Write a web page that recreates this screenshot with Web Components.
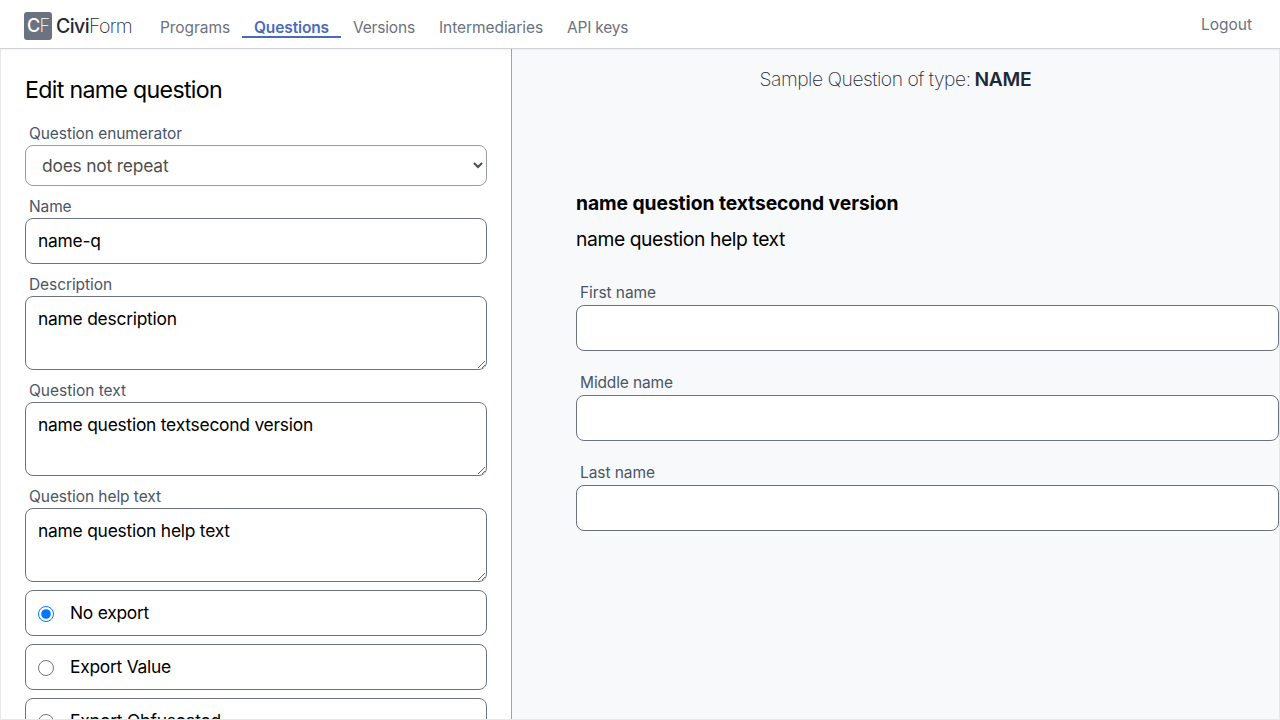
<!DOCTYPE html>
<html lang="en">
<head>
<meta charset="utf-8">
<title>Edit name question</title>
<style>
html, body { margin: 0; height: 100%; overflow: hidden; background: #fff; }
body { font-family: Inter, "Liberation Sans", sans-serif; font-size: 15.5px; line-height: 24px; color: #000; }
</style>
</head>
<body>
<civi-page></civi-page>
<script>
function define(name, html, setup) {
  const t = document.createElement('template');
  t.innerHTML = '<style>*{box-sizing:border-box}:host{box-sizing:border-box;display:block}</style>' + html;
  customElements.define(name, class extends HTMLElement {
    connectedCallback() {
      if (!this.shadowRoot) this.attachShadow({ mode: 'open' }).append(t.content.cloneNode(true));
      if (setup) setup(this, this.shadowRoot);
    }
  });
}

/* Text with tracking that makes it exactly `w` pixels wide. */
define('fit-text', '<style>:host{display:inline-block;white-space:nowrap}</style><slot></slot>', el => {
  const w = parseFloat(el.getAttribute('w'));
  if (!w) return;
  el.style.letterSpacing = '0px';
  const n = el.textContent.length;
  el.style.letterSpacing = ((w - el.getBoundingClientRect().width) / n).toFixed(4) + 'px';
});

define('civi-logo', `<style>
:host{display:flex;align-items:center;width:124px;height:28px;margin-top:12px;color:#1f2937;font-size:19.5px;line-height:28px}
.mark{width:28px;height:28px;border-radius:3px;background:#6b7280;color:#fff;margin-right:4px;display:flex;justify-content:center;font-size:18px}
.mark fit-text{font-weight:500}
.name fit-text{font-weight:450}
.mark fit-text.thin,.name fit-text.thin{font-weight:200}
.name{display:flex}
</style><div class="mark"><fit-text w="12.5">C</fit-text><fit-text class="thin" w="9.5">F</fit-text></div>
<div class="name"><fit-text w="33">Civi</fit-text><fit-text class="thin" w="43">Form</fit-text></div>`);

define('nav-item', `<style>
:host{padding:1px 12px 0;height:23px;color:#6b7280;border-bottom:2px solid transparent;margin-top:15px}
:host([active]){color:#4a6bba;border-color:#4a6bba;font-weight:600}
</style><slot></slot>`);

define('civi-header', `<style>
:host{display:flex;height:49px;background:#fff;border-bottom:1px solid #d0d2d7;padding:0 28px 0 24px;position:relative;box-shadow:0 1px 2px rgba(0,0,0,.05)}
.out{margin-left:auto;margin-top:13px;color:#6b7280}
</style><civi-logo></civi-logo>
<nav-item><fit-text w="70">Programs</fit-text></nav-item>
<nav-item active><fit-text w="75">Questions</fit-text></nav-item>
<nav-item><fit-text w="62">Versions</fit-text></nav-item>
<nav-item><fit-text w="104">Intermediaries</fit-text></nav-item>
<nav-item><fit-text w="61.3">API keys</fit-text></nav-item>
<div class="out"><fit-text w="51">Logout</fit-text></div>`);

/* Labelled control: kind is select, input or area. */
define('form-field', `<style>
:host{margin-bottom:8px}
label{display:block;height:24px;padding:var(--label-drop,1px) 0 0 4px;color:#4a5568}
input,textarea,select{display:block;width:100%;margin:0;border:1px solid #6b7280;border-radius:8px;background:#fff;color:#000;font:17.4px/28px Inter,"Liberation Sans",sans-serif;letter-spacing:-.23px;outline:0;opacity:1}
input{height:46px;padding:7px 12px 9px}
textarea{height:74px;padding:8px 12px;overflow:auto}
select{height:41px;padding:0 0 0 12px;opacity:.7;letter-spacing:-.2px}
</style><label></label>`, (el, root) => {
  const label = document.createElement('fit-text');
  label.textContent = el.getAttribute('label');
  label.setAttribute('w', el.getAttribute('lw'));
  root.querySelector('label').append(label);
  const kind = el.getAttribute('kind') || 'input', value = el.getAttribute('value') || '';
  const c = document.createElement(kind === 'area' ? 'textarea' : kind);
  if (kind === 'select') { c.append(new Option(value)); c.disabled = true; }
  else if (kind === 'area') c.textContent = value;
  else c.value = value;
  root.append(c);
});

define('radio-option', `<style>
:host{margin-bottom:8px}
label{display:flex;height:46px;border:1px solid #6b7280;border-radius:8px;padding:8px 12px;font-size:17.4px;line-height:28px;background:#fff}
input{width:16px;height:16px;margin:7px 16px 0 0}
</style><label><input type="radio"><slot></slot></label>`, (el, root) => {
  root.querySelector('input').checked = el.hasAttribute('checked');
});

define('question-form', `<style>
:host{background:#fff;border-right:1px solid #9ca3af;padding:25px 24px 0;overflow:hidden}
h1{margin:0 0 15px;font-size:23.2px;line-height:32px;font-weight:400}
</style><h1><fit-text w="197">Edit name question</fit-text></h1>
<form-field kind="select" label="Question enumerator" lw="153" value="does not repeat"></form-field>
<form-field label="Name" lw="42.5" value="name-q"></form-field>
<form-field kind="area" label="Description" lw="83" value="name description"></form-field>
<form-field kind="area" label="Question text" lw="97" value="name question textsecond version"></form-field>
<form-field kind="area" label="Question help text" lw="132" value="name question help text"></form-field>
<radio-option checked><fit-text w="79">No export</fit-text></radio-option>
<radio-option><fit-text w="101">Export Value</fit-text></radio-option>
<radio-option><fit-text w="151">Export Obfuscated</fit-text></radio-option>`);

define('question-preview', `<style>
:host{background:#f8f9fb;overflow:hidden;--label-drop:0px}
header{display:flex;justify-content:center;gap:4px;padding-top:16px;height:64px;color:#1f2937;font-size:19.3px;line-height:28px;font-weight:200}
b{font-weight:600}
section{padding:76px 0 0 64px;font-size:19.3px;line-height:28px}
section>div{height:28px;margin-bottom:8px}
.title{font-weight:700}
form{display:grid;gap:20px;margin-top:28px;font-size:15.5px;line-height:24px}
form-field{margin-bottom:0}
</style><header><fit-text w="211">Sample Question of type:</fit-text><b><fit-text w="57">NAME</fit-text></b></header>
<section><div class="title"><fit-text w="322.5">name question textsecond version</fit-text></div>
<div><fit-text w="209">name question help text</fit-text></div>
<form><form-field label="First name" lw="76"></form-field><form-field label="Middle name" lw="93"></form-field><form-field label="Last name" lw="75"></form-field></form></section>`);

define('civi-page', `<style>
:host{display:flex;flex-direction:column;height:100vh}
civi-header{flex:none;z-index:1}
main{flex:1;min-height:0;display:grid;grid-template-columns:511px 1fr;grid-template-rows:minmax(0,1fr);border:1px solid #e5e7eb;border-top:0}
</style><civi-header></civi-header><main><question-form></question-form><question-preview></question-preview></main>`);
</script>
</body>
</html>
